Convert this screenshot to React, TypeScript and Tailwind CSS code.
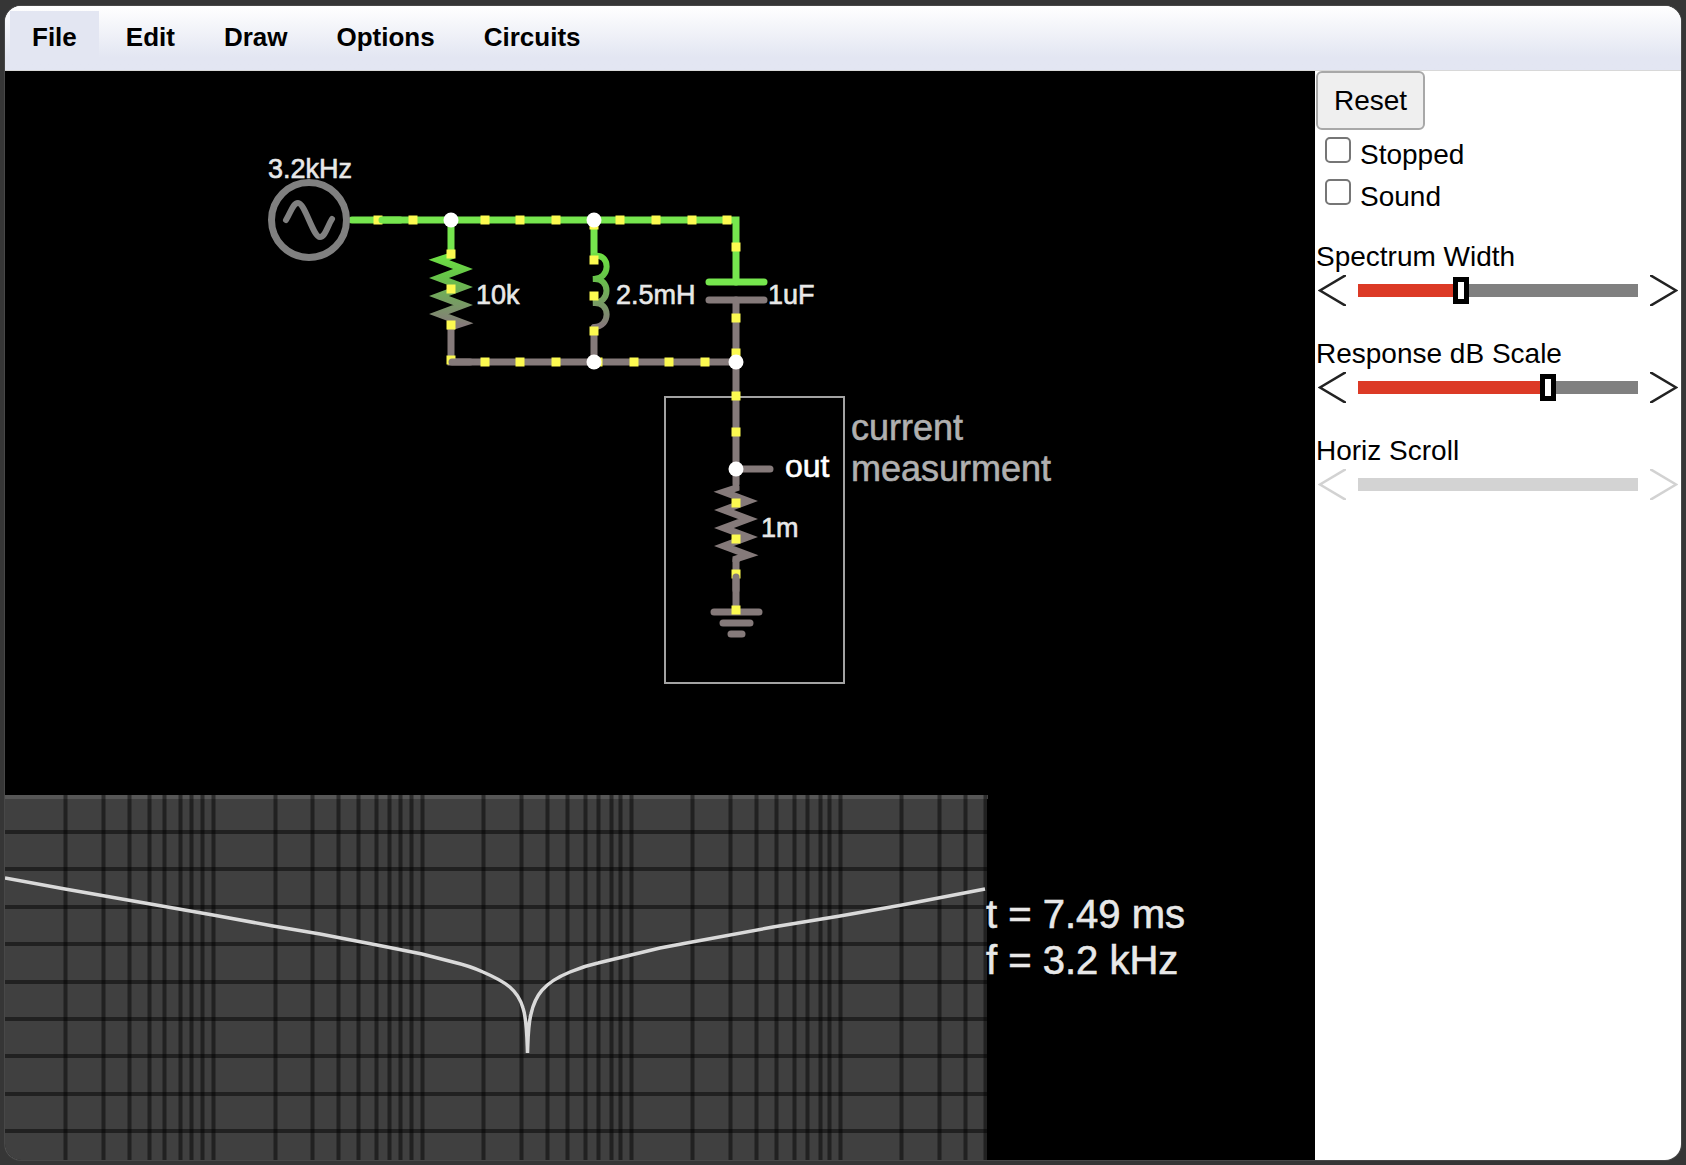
import { useState } from 'react';

const GREEN = '#76e64e';
const GRAY = '#857a7a';
const YELLOW = '#fcfa50';

const menuItems = ['File', 'Edit', 'Draw', 'Options', 'Circuits'];

// centres of the current dots
const dots = [
  [413, 220], [485, 220], [520, 220], [556, 220], [620, 220], [656, 220], [692, 220], [727, 220],
  [451, 254], [451, 289], [451, 325],
  [594, 225], [594, 260], [594, 296], [594, 331],
  [485, 362], [520, 362], [556, 362], [598, 362], [634, 362], [669, 362], [705, 362],
  [736, 247], [736, 318], [736, 353], [736, 396], [736, 432],
  [736, 503], [736, 539], [736, 610],
];

const nodes = [[451, 220], [594, 220], [594, 362], [736, 362], [736, 469]];

const gridRows = [832, 869, 907, 944, 982, 1019, 1056, 1094, 1131];
const gridColumns = [
  65, 103, 129, 149, 164, 180, 191, 202, 213,
  275, 312, 338, 358, 376, 389, 400, 411, 422,
  483, 521, 547, 567, 585, 598, 611, 620, 631,
  692, 730, 756, 776, 794, 807, 820, 829, 840,
  901, 939, 965, 985,
];

function zigzag(x: number, y: number) {
  let d = `M${x} ${y - 6}L${x} ${y - 4}`;
  for (let i = 0; i < 8; i++) {
    d += `L${x + (i % 2 ? 12 : -12)} ${y + i * 9}`;
  }
  return d + `L${x} ${y + 67}V${y + 70}`;
}

function Dot({ x, y }: { x: number; y: number }) {
  return <rect x={x - 4.5} y={y - 4.5} width="9" height="9" fill={YELLOW} />;
}

function Circuit() {
  return (
    <g fill="none" strokeWidth="7" strokeLinecap="round">
      <rect x="665" y="397" width="179" height="286" stroke="#a3a3a3" strokeWidth="2" />

      {/* wires */}
      <path d="M352 220H736V282M451 220V251M594 220V256" stroke={GREEN} />
      <path d="M451 329V362H736M594 328V362M736 300V484M736 560V610M736 469H770" stroke={GRAY} />

      {/* source */}
      <circle cx="309" cy="220" r="37.5" stroke="#808080" />
      <path
        d="M286 220C291 212 293 203 298 203C305 203 313 237 320 237C325 237 327 227 332 219"
        stroke="#808080"
        strokeWidth="6"
      />

      {/* resistors */}
      <path d={zigzag(451, 260)} stroke="url(#drop)" strokeLinecap="butt" strokeMiterlimit="10" />
      <path d={zigzag(736, 492)} stroke={GRAY} strokeLinecap="butt" strokeMiterlimit="10" />

      {/* inductor */}
      <path
        d="M594 256C611 253 611 280 593 279C611 277 611 304 593 303C611 301 611 327 594 327"
        stroke="url(#drop)"
        strokeWidth="6"
      />

      {/* capacitor */}
      <path d="M709 282H764" stroke={GREEN} />
      <path d="M709 300H764" stroke={GRAY} />

      {/* ground */}
      <path d="M714 612H759M723 623H750M731 634H742" stroke={GRAY} />

      <Dot x={378} y={220} />
      <path d="M382 220H400" stroke={GREEN} />
      <Dot x={451} y={360} />
      <path d="M452 362H470" stroke={GRAY} />
      <Dot x={736} y={574} />
      <path d="M736 577V590" stroke={GRAY} />
      {dots.map(([x, y]) => (
        <Dot key={`${x}-${y}`} x={x} y={y} />
      ))}
      {nodes.map(([x, y]) => (
        <circle key={`${x}-${y}`} cx={x} cy={y} r="7.5" fill="#fff" />
      ))}
    </g>
  );
}

function Labels() {
  return (
    <g fill="#e8e8e8" stroke="#e8e8e8" strokeWidth="0.6">
      <g className="text-[27px]">
        <text x="268" y="178">3.2kHz</text>
        <text x="476" y="304">10k</text>
        <text x="616" y="304">2.5mH</text>
        <text x="768" y="304">1uF</text>
        <text x="761" y="537">1m</text>
      </g>
      <text x="785" y="477" fill="#fff" stroke="#fff" className="text-[32px]">out</text>
      <g fill="#b0b0b0" stroke="#b0b0b0" className="text-[36px]">
        <text x="851" y="440">current</text>
        <text x="851" y="481">measurment</text>
      </g>
      <g className="text-[40px]">
        <text x="986" y="928">t = 7.49 ms</text>
        <text x="986" y="974">f = 3.2 kHz</text>
      </g>
    </g>
  );
}

function ResponsePlot() {
  return (
    <g fill="none">
      <rect x="5" y="795" width="982" height="365" fill="#404040" />
      <path d="M5 797H988" stroke="#565656" strokeWidth="4" />
      <g stroke="#000" strokeOpacity="0.48" strokeWidth="4">
        {gridRows.map((y) => (
          <path key={y} d={`M5 ${y}H987`} />
        ))}
        {gridColumns.map((x) => (
          <path key={x} d={`M${x + 0.5} 795V1160`} />
        ))}
      </g>
      <path
        d="M5 878L65 889L213 915L273 926L320 934L377 945L422 954L453 962Q470 966 483 972C506 982 518 990 523 1008C527 1020 527 1040 527.5 1053C528 1040 528 1025 531 1014C535 996 543 983 570 972Q584 966 598 963L631 955L660 948L692 942L773 927L840 916L902 905L985 889"
        stroke="#dadada"
        strokeWidth="3.5"
      />
    </g>
  );
}

function Arrow({ points, label, disabled }: { points: string; label: string; disabled?: boolean }) {
  return (
    <button type="button" aria-label={label} disabled={disabled} className="shrink-0 disabled:opacity-20">
      <svg width="28" height="31" viewBox="0 0 28 31" fill="none" stroke="#222" strokeWidth="2.5">
        <polyline points={points} />
      </svg>
    </button>
  );
}

interface SliderProps {
  id: string;
  label: string;
  initial: number;
  disabled?: boolean;
}

function Slider({ id, label, initial, disabled }: SliderProps) {
  const [value, setValue] = useState(initial);
  const rest = disabled ? '#d3d3d3' : '#808080';
  const fill = disabled ? 0 : value;

  return (
    <div className="mb-[30px]">
      <label htmlFor={id} className="block pl-px leading-[34px]">{label}</label>
      <div className="flex h-[33px] items-center gap-3 px-[3px]">
        <Arrow points="28,0 2,15.5 28,31" label={`Decrease ${label}`} disabled={disabled} />
        <input
          id={id}
          type="range"
          min={0}
          max={100}
          value={value}
          disabled={disabled}
          onChange={(e) => setValue(Number(e.target.value))}
          style={{ '--track': `linear-gradient(to right, #dc3a26 ${fill}%, ${rest} ${fill}%)` } as React.CSSProperties}
          className="h-8 min-w-0 flex-1 appearance-none bg-transparent [&::-webkit-slider-runnable-track]:h-[13px] [&::-webkit-slider-runnable-track]:[background:var(--track)] [&::-webkit-slider-thumb]:-mt-[7px] [&::-webkit-slider-thumb]:h-[27px] [&::-webkit-slider-thumb]:w-4 [&::-webkit-slider-thumb]:appearance-none [&::-webkit-slider-thumb]:border-5 [&::-webkit-slider-thumb]:border-black [&::-webkit-slider-thumb]:bg-white disabled:[&::-webkit-slider-thumb]:invisible"
        />
        <Arrow points="0,0 26,15.5 0,31" label={`Increase ${label}`} disabled={disabled} />
      </div>
    </div>
  );
}

function Check({ label }: { label: string }) {
  return (
    <label className="flex h-[42px] items-start gap-[9px] pl-[10px] leading-[42px]">
      <input
        type="checkbox"
        className="mt-[3px] size-[26px] appearance-none rounded-[5px] border-2 border-[#767676] bg-white checked:bg-blue-600"
      />
      {label}
    </label>
  );
}

export default function App() {
  return (
    <div className="h-screen bg-[#363636] px-[5px] pt-[6px] pb-[5px] font-['Liberation_Sans',Arial,sans-serif] text-black">
      <div className="flex h-full flex-col overflow-hidden rounded-2xl bg-white ring-1 ring-[#484848]">
        <nav className="flex h-[65px] shrink-0 items-start gap-[5px] border-b border-[#d8d8d8] bg-linear-to-b from-white to-[#e3e6f2] to-80% px-[5px] pt-[5px]">
          {menuItems.map((item) => (
            <button
              key={item}
              type="button"
              className={`h-[52px] px-[22px] text-[26px] font-bold ${item === 'File' ? 'bg-[#e3e6f2]' : ''}`}
            >
              {item}
            </button>
          ))}
        </nav>

        <div className="flex min-h-0 flex-1">
          <main className="min-w-0 flex-1 bg-black">
            <svg className="block size-full" viewBox="5 71 1310 1089" preserveAspectRatio="xMinYMin meet">
              <defs>
                <linearGradient id="drop" gradientUnits="userSpaceOnUse" x1="0" y1="255" x2="0" y2="325">
                  <stop offset="0" stopColor="#6fe044" />
                  <stop offset="0.3" stopColor="#66c548" />
                  <stop offset="1" stopColor={GRAY} />
                </linearGradient>
              </defs>
              <ResponsePlot />
              <Circuit />
              <Labels />
            </svg>
          </main>

          <aside className="w-[366px] shrink-0 text-[28px]">
            <button
              type="button"
              className="mb-1 ml-px block rounded-md border-2 border-[#a8a8a8] bg-[#efefef] px-4 py-[11px] leading-[33px]"
            >
              Reset
            </button>
            <Check label="Stopped" />
            <Check label="Sound" />
            <div className="mt-[22px]">
              <Slider id="spectrum-width" label="Spectrum Width" initial={36} />
              <Slider id="db-scale" label="Response dB Scale" initial={69} />
              <Slider id="horiz-scroll" label="Horiz Scroll" initial={0} disabled />
            </div>
          </aside>
        </div>
      </div>
    </div>
  );
}
